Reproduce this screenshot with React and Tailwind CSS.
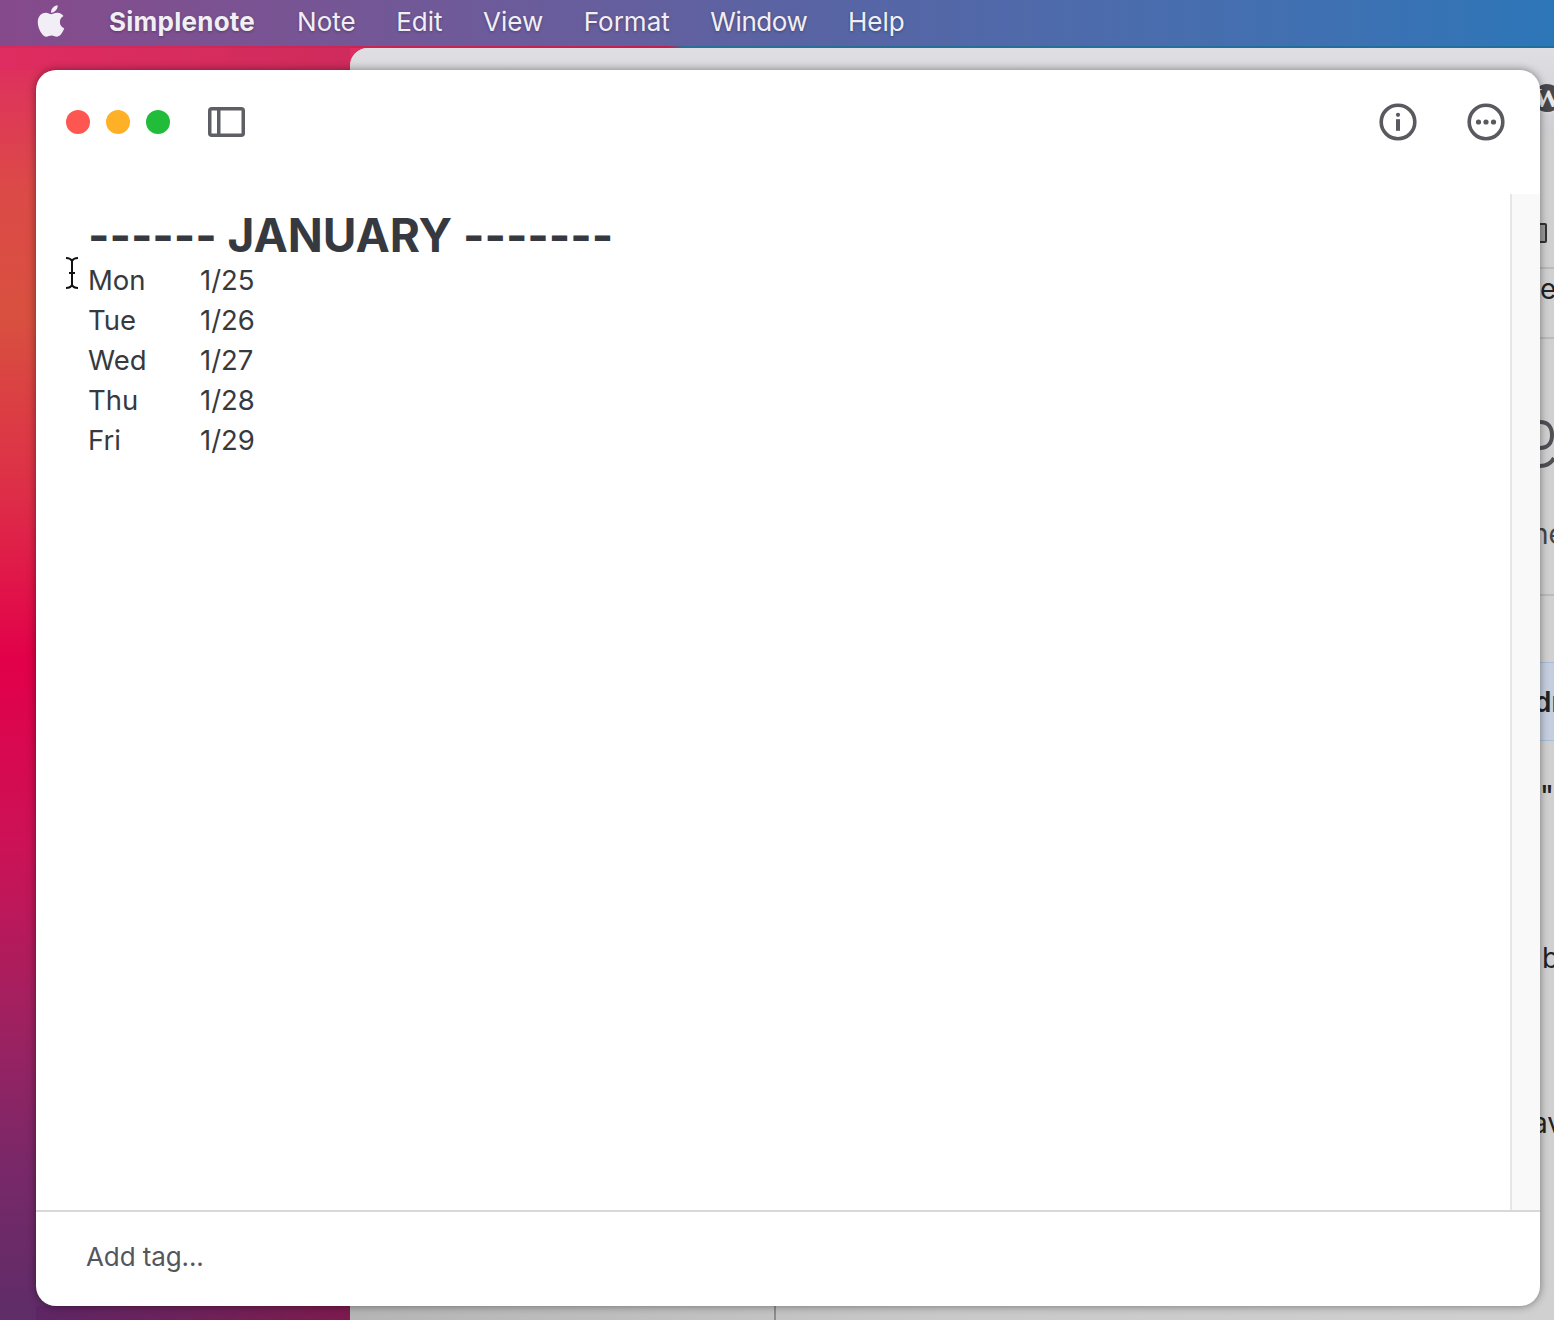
import React from "react";
import { FaApple } from "react-icons/fa";

const menus = ["Note", "Edit", "View", "Format", "Window", "Help"];
const rows = [
  ["Mon", "1/25"],
  ["Tue", "1/26"],
  ["Wed", "1/27"],
  ["Thu", "1/28"],
  ["Fri", "1/29"],
];

function MenuBar() {
  return (
    <div className="relative z-10 flex h-[46px] items-center bg-gradient-to-r from-[#864a8b] via-[#5a63a3] to-[#2c76b8] pb-[3px] pl-[36px] text-[26px] text-[#f1eef6] [text-shadow:0_1px_3px_rgba(0,0,0,0.3)]">
      <FaApple className="mr-[43px] h-[36px] w-[30px] -translate-y-[1px] text-[#f1eef6]" />
      <span className="mr-[42px] font-bold tracking-[0.25px]">Simplenote</span>
      <div className="flex gap-[40.5px] font-normal">
        {menus.map((m) => (
          <span key={m} className={m === "Window" ? "tracking-[-0.4px]" : ""}>{m}</span>
        ))}
      </div>
    </div>
  );
}

function BackWindow() {
  return (
    <div className="absolute left-[350px] right-0 top-[48px] bottom-0 flex flex-col overflow-hidden rounded-tl-[18px] bg-[#c9c9cc] text-[#222]">
      <div className="h-[84px] shrink-0 bg-gradient-to-b from-[#dfdfe3] to-[#cfcfd3]" />
      <div className="relative flex-1 bg-gradient-to-r from-[#b5b5b5] via-[#c9c9c9] to-[#d0d0d0]">
        <div className="absolute right-[7px] top-[91px] h-[20px] w-[14px] rounded-[2px] border-2 border-[#333] bg-[#9a9a9a]" />
        <div className="absolute right-0 top-[135px] h-[2px] w-[14px] bg-[#bbbbbb]" />
        <div className="absolute right-0 top-[137px] w-[14px] overflow-hidden text-[28px] leading-[40px]">e</div>
        <div className="absolute right-0 top-[205px] h-[2px] w-[14px] bg-[#bbbbbb]" />
        <svg className="absolute right-0 top-[287px]" width="14" height="50" viewBox="0 0 14 50" fill="none" stroke="#4f4f55" strokeWidth="4">
          <path d="M0 3C8 3 12 8 12 16S8 29 0 29M14 39C11 45 6 47 0 47" />
        </svg>
        <div className="absolute right-0 top-[382px] w-[14px] overflow-hidden whitespace-nowrap text-[28px] leading-[40px] text-[#444]">
          <span className="ml-[-8px]">ne</span>
        </div>
        <div className="absolute right-0 top-[462px] h-[2px] w-[14px] bg-[#bbbbbb]" />
        <div className="absolute right-0 top-[530px] flex h-[79px] w-[14px] items-center overflow-hidden border-y border-[#a8bbdc] bg-[#c5cede] text-[28px] font-semibold whitespace-nowrap">
          <span className="ml-[-6px]">dr</span>
        </div>
        <div className="absolute right-0 top-[644px] w-[14px] overflow-hidden text-[28px] font-medium leading-[40px]">"</div>
        <div className="absolute right-0 top-[806px] w-[14px] overflow-hidden text-[28px] leading-[40px]">
          <span className="ml-[2px]">b</span>
        </div>
        <div className="absolute right-0 top-[971px] w-[14px] overflow-hidden whitespace-nowrap text-[28px] leading-[40px]">
          <span className="ml-[-8px]">av</span>
        </div>
        <div className="absolute bottom-0 left-[424px] h-[14px] w-[2px] bg-[#8d8d8d]" />
      </div>
      <div className="absolute left-[1181px] top-[34px] flex h-[32px] w-[32px] items-center justify-center overflow-hidden rounded-full border-2 border-[#d8d8dc] bg-[#47474c] font-['Liberation_Serif',serif] text-[28px] font-bold leading-none text-[#e8e8e8]">
        W
      </div>
    </div>
  );
}

function Icons() {
  return (
    <div className="flex gap-[48px]">
      <svg width="40" height="40" viewBox="0 0 40 40" fill="none">
        <circle cx="20" cy="20" r="16.8" stroke="#59595f" strokeWidth="3.6" />
        <circle cx="20" cy="12.8" r="2.1" fill="#59595f" />
        <rect x="18" y="17.2" width="4" height="11.6" fill="#59595f" />
      </svg>
      <svg width="40" height="40" viewBox="0 0 40 40" fill="none">
        <circle cx="20" cy="20" r="16.8" stroke="#59595f" strokeWidth="3.6" />
        <circle cx="12.5" cy="20" r="2.6" fill="#59595f" />
        <circle cx="20" cy="20" r="2.6" fill="#59595f" />
        <circle cx="27.5" cy="20" r="2.6" fill="#59595f" />
      </svg>
    </div>
  );
}

function NoteWindow() {
  return (
    <div className="absolute left-[36px] right-[14px] top-[70px] bottom-[14px] flex flex-col overflow-hidden rounded-[20px] bg-white shadow-[0_0_8px_rgba(0,0,0,0.45)]">
      <div className="flex h-[124px] shrink-0 items-start justify-between pl-[30px] pr-[34px] pt-[32px]">
        <div className="flex items-center">
          <div className="flex gap-[16px] py-[8px]">
            <div className="h-[24px] w-[24px] rounded-full bg-[#fe5650]" />
            <div className="h-[24px] w-[24px] rounded-full bg-[#feb127]" />
            <div className="h-[24px] w-[24px] rounded-full bg-[#21bc3a]" />
          </div>
          <svg className="ml-[38px]" width="37" height="30" viewBox="0 0 37 30" fill="none">
            <rect x="1.75" y="1.75" width="33.5" height="26.5" rx="2" stroke="#5e5f65" strokeWidth="3.5" />
            <rect x="9" y="2" width="3.5" height="26" fill="#5e5f65" />
          </svg>
        </div>
        <Icons />
      </div>
      <div className="flex min-h-0 flex-1">
        <div className="flex-1 pl-[52px] pt-[16px] text-[#363a40]">
          <div className="h-[50px] text-[46px] font-bold leading-[50px] tracking-[-0.06px]">------ JANUARY -------</div>
          <div className="text-[27.5px] leading-[40px]">
            {rows.map(([d, n]) => (
              <div key={d} className="flex">
                <span className="w-[112px]">{d}</span>
                <span>{n}</span>
              </div>
            ))}
          </div>
        </div>
        <div className="w-[30px] shrink-0 border-l-2 border-[#e6e6e6] bg-[#f9f9f9]" />
      </div>
      <div className="flex h-[96px] shrink-0 items-center border-t-2 border-[#d8d8dc] pb-[6px] pl-[50px] text-[26px] tracking-[-0.1px] text-[#55565c]">
        Add tag...
      </div>
      <svg className="absolute left-[28px] top-[186px]" width="16" height="34" viewBox="0 0 16 34" fill="none" stroke="#111" strokeWidth="2">
        <path d="M2 2c3 0 5 1 6 3 1-2 3-3 6-3M8 5v24M2 32c3 0 5-1 6-3 1 2 3 3 6 3M5 17h6" />
      </svg>
    </div>
  );
}

export default function App() {
  return (
    <div className="relative h-[1320px] w-[1554px] overflow-hidden font-['Inter',sans-serif]">
      <div className="absolute inset-0 bg-[linear-gradient(180deg,#de2d60_4%,#dc4a48_14%,#d8503f_24%,#de2c48_38%,#e2004a_50%,#cc1256_64%,#a4205f_76%,#7a2868_88%,#5e2d68_100%)]" />
      <div className="absolute bottom-0 left-[36px] h-[14px] w-[314px] bg-gradient-to-r from-[#5e2565] to-[#7d1a4e]" />
      <div className="absolute left-0 top-[46px] h-[24px] w-[350px] bg-gradient-to-r from-[#e02c60] to-[#cf2b5c]" />
      <div className="absolute left-0 right-0 top-[46px] h-[2px] bg-[linear-gradient(90deg,#d82a5e_0%,#c0204f_43%,#2a6f96_44%,#1f6f9e_100%)]" />
      <MenuBar />
      <BackWindow />
      <NoteWindow />
    </div>
  );
}
